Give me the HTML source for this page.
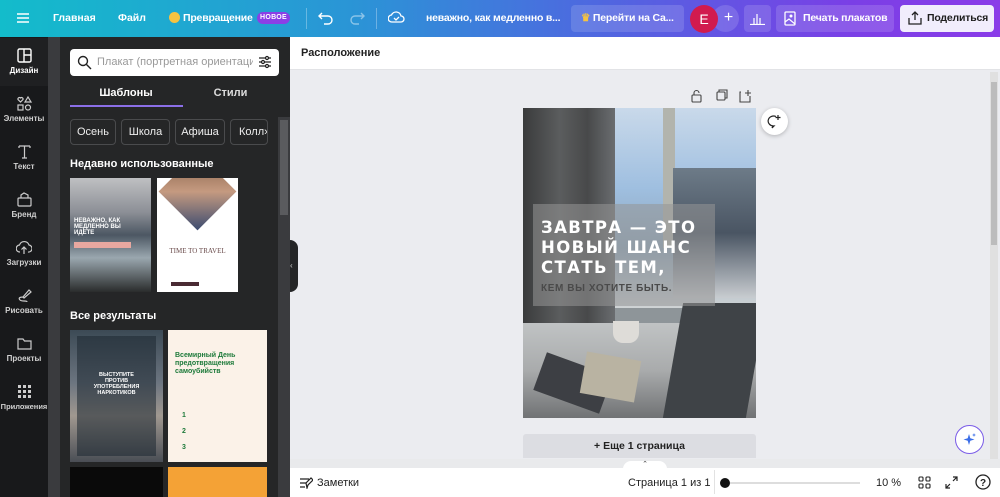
<!DOCTYPE html>
<html><head><meta charset="utf-8"><style>
*{margin:0;padding:0;box-sizing:border-box;white-space:nowrap}
body{width:1000px;height:497px;overflow:hidden;font-family:"Liberation Sans","Noto Sans CJK SC",sans-serif;background:#ebecf0;position:relative}
.abs{position:absolute}
.top{left:0;top:0;width:1000px;height:37px;background:linear-gradient(90deg,#13bccb 0%,#2a95d6 35%,#4f67e0 60%,#7a3fe6 85%,#8a3ce8 100%);color:#fff;font-size:10.5px;font-weight:bold}
.top span{position:absolute;top:12px}
.btn{position:absolute;top:5px;height:27px;border-radius:4px;background:rgba(255,255,255,.14);color:#fff;font-size:10.5px;font-weight:bold;line-height:27px;overflow:hidden}
.side{left:0;top:37px;width:48px;height:460px;background:#18191b;color:#d0d0d0;font-size:8px;font-weight:bold;text-align:center}
.si{position:absolute;left:0;width:48px;height:48px}
.si svg{display:block;margin:10px auto 3px}
.panel{left:60px;top:37px;width:230px;height:460px;background:#252627}
.chip{position:absolute;top:82px;height:26px;border:1px solid #4a4b4d;border-radius:4px;color:#eee;font-size:11px;line-height:24px;text-align:center}
</style></head><body>
<div class="abs top">
<svg class="abs" style="left:17px;top:12px" width="12" height="12" viewBox="0 0 12 12"><path d="M0 2h12M0 6h12M0 10h12" stroke="#fff" stroke-width="1.4"/></svg>
<span style="left:53px">Главная</span><span style="left:118px">Файл</span>
<div class="abs" style="left:169px;top:12px;width:11px;height:11px;border-radius:50%;background:#f5c342"></div>
<span style="left:183px;letter-spacing:-.2px">Превращение</span>
<div class="abs" style="left:257px;top:12px;width:33px;height:12px;border-radius:6px;background:#8b3fe6;font-size:7px;line-height:12px;text-align:center;letter-spacing:.3px">НОВОЕ</div>
<div class="abs" style="left:306px;top:8px;width:1px;height:21px;background:rgba(255,255,255,.3)"></div>
<svg class="abs" style="left:318px;top:11px" width="16" height="14" viewBox="0 0 16 14"><path d="M4 2L1 5l3 3M1 5h9a4 4 0 010 8H6" fill="none" stroke="#fff" stroke-width="1.4"/></svg>
<svg class="abs" style="left:349px;top:11px" width="16" height="14" viewBox="0 0 16 14"><path d="M12 2l3 3-3 3M15 5H6a4 4 0 000 8h4" fill="none" stroke="rgba(255,255,255,.45)" stroke-width="1.4"/></svg>
<div class="abs" style="left:376px;top:8px;width:1px;height:21px;background:rgba(255,255,255,.3)"></div>
<svg class="abs" style="left:388px;top:10px" width="17" height="14" viewBox="0 0 17 14"><path d="M4 12h9a3 3 0 000-6 5 5 0 00-9.5-1A3.5 3.5 0 004 12z" fill="none" stroke="#fff" stroke-width="1.3"/><path d="M6 8l2 2 3-3" fill="none" stroke="#fff" stroke-width="1.3"/></svg>
<span style="left:426px;letter-spacing:-.2px">неважно, как медленно в...</span>
<div class="btn" style="left:571px;width:113px;padding-left:10px;letter-spacing:-.2px"><span style="color:#f5c342;position:static">♛</span> Перейти на Са...</div>
<div class="abs" style="left:712px;top:5px;width:27px;height:27px;border-radius:50%;background:rgba(255,255,255,.14);font-size:16px;font-weight:normal;line-height:26px;text-align:center;padding-left:6px">+</div>
<div class="abs" style="left:690px;top:5px;width:28px;height:28px;border-radius:50%;background:#d11b4f;font-size:14px;font-weight:normal;line-height:28px;text-align:center">E</div>
<div class="btn" style="left:744px;width:27px"><svg style="margin:7px 6px" width="15" height="13" viewBox="0 0 15 13"><path d="M0 12.5h15M4 12V6M7 12V2M10 12V6" stroke="#fff" stroke-width="1.2"/></svg></div>
<div class="btn" style="left:776px;width:118px"><svg class="abs" style="left:8px;top:6px" width="12" height="15" viewBox="0 0 12 15"><rect x="1" y="1" width="10" height="13" rx="1" fill="none" stroke="#fff" stroke-width="1.3"/><circle cx="7" cy="5" r="1.5" fill="#fff"/><path d="M1 11l4-3 6 5" fill="none" stroke="#fff" stroke-width="1.2"/></svg><span style="left:27px;top:0;letter-spacing:-.2px">Печать плакатов</span></div>
<div class="btn" style="left:900px;width:94px;background:#f1edfc;color:#1e1e1e"><svg class="abs" style="left:8px;top:6px" width="14" height="14" viewBox="0 0 14 14"><path d="M7 9V1M4 4l3-3 3 3M1 7v6h12V7" fill="none" stroke="#222" stroke-width="1.3"/></svg><span style="left:27px;top:0;letter-spacing:-.2px">Поделиться</span></div>
</div>

<div class="abs side">
<div class="si" style="top:1px;background:#1f2022;color:#fff"><svg width="15" height="15" viewBox="0 0 15 15"><rect x="1" y="1" width="13" height="13" rx="1.5" fill="none" stroke="#fff" stroke-width="1.4"/><path d="M7 1v13M7 7h7" stroke="#fff" stroke-width="1.4"/></svg>Дизайн</div>
<div class="si" style="top:49px"><svg width="15" height="15" viewBox="0 0 15 15" fill="none" stroke="#ccc" stroke-width="1.2"><path d="M3.5 6L1 3.5a1.5 1.5 0 012.5-1.5 1.5 1.5 0 012.5 1.5z"/><path d="M11 1l3 5H8z"/><rect x="1" y="9" width="5" height="5"/><circle cx="11" cy="11.5" r="2.5"/></svg>Элементы</div>
<div class="si" style="top:97px"><svg width="15" height="15" viewBox="0 0 15 15"><path d="M2 2h11M7.5 2v12M2 2v2M13 2v2M5 14h5" stroke="#ccc" stroke-width="1.2" fill="none"/></svg>Текст</div>
<div class="si" style="top:145px"><svg width="15" height="15" viewBox="0 0 15 15" fill="none" stroke="#ccc" stroke-width="1.2"><rect x="1" y="6" width="13" height="8" rx="1"/><path d="M4 6V3l3-2 4 2v3"/></svg>Бренд</div>
<div class="si" style="top:193px"><svg width="16" height="15" viewBox="0 0 16 15" fill="none" stroke="#ccc" stroke-width="1.2"><path d="M4 12a3.5 3.5 0 01-.5-7A5 5 0 0113 5a3.5 3.5 0 01-1 7M8 14V7M5.5 9.5L8 7l2.5 2.5"/></svg>Загрузки</div>
<div class="si" style="top:241px"><svg width="15" height="15" viewBox="0 0 15 15" fill="none" stroke="#ccc" stroke-width="1.2"><path d="M6 9l6-7 2 2-7 6zM6 9c-3 0-5 1-3 3s7 0 7 2"/></svg>Рисовать</div>
<div class="si" style="top:289px"><svg width="15" height="15" viewBox="0 0 15 15" fill="none" stroke="#ccc" stroke-width="1.2"><path d="M1 3h5l1.5 2H14v8H1z"/></svg>Проекты</div>
<div class="si" style="top:337px;font-size:7.5px"><svg width="15" height="15" viewBox="0 0 15 15" fill="#ccc"><rect x="1" y="1" width="3" height="3"/><rect x="6" y="1" width="3" height="3"/><rect x="11" y="1" width="3" height="3"/><rect x="1" y="6" width="3" height="3"/><rect x="6" y="6" width="3" height="3"/><rect x="11" y="6" width="3" height="3"/><rect x="1" y="11" width="3" height="3"/><rect x="6" y="11" width="3" height="3"/><rect x="11" y="11" width="3" height="3"/></svg>Приложения</div>
</div>
<div class="abs" style="left:48px;top:37px;width:12px;height:460px;background:#3a3b3e"></div>

<div class="abs panel">
<div class="abs" style="left:10px;top:12px;width:209px;height:27px;background:#fff;border-radius:4px"></div>
<svg class="abs" style="left:17px;top:18px" width="15" height="15" viewBox="0 0 15 15"><circle cx="6" cy="6" r="4.5" fill="none" stroke="#222" stroke-width="1.4"/><path d="M9.5 9.5L14 14" stroke="#222" stroke-width="1.4"/></svg>
<div class="abs" style="left:37px;top:19px;width:156px;overflow:hidden;font-size:11px;color:#999">Плакат (портретная ориентация):</div>
<svg class="abs" style="left:198px;top:18px" width="14" height="14" viewBox="0 0 14 14" stroke="#222" stroke-width="1.2" fill="#fff"><path d="M1 3h12M1 7h12M1 11h12"/><circle cx="9" cy="3" r="1.5"/><circle cx="5" cy="7" r="1.5"/><circle cx="9" cy="11" r="1.5"/></svg>
<div class="abs" style="left:10px;top:50px;width:112px;text-align:center;color:#fff;font-size:11px;font-weight:bold">Шаблоны</div>
<div class="abs" style="left:122px;top:50px;width:97px;text-align:center;color:#ddd;font-size:11px;font-weight:bold">Стили</div>
<div class="abs" style="left:10px;top:68px;width:113px;height:2px;background:#8b6fe8"></div>
<div class="chip" style="left:10px;width:46px">Осень</div>
<div class="chip" style="left:61px;width:49px">Школа</div>
<div class="chip" style="left:115px;width:50px">Афиша</div>
<div class="chip" style="left:170px;width:38px;text-align:left;padding-left:8px;overflow:hidden">Колл›</div>
<div class="abs" style="left:10px;top:121px;color:#fff;font-size:11px;font-weight:bold">Недавно использованные</div>
<div class="abs" style="left:10px;top:141px;width:81px;height:114px;background:linear-gradient(180deg,#bfc0c2 0%,#8c8f96 30%,#4c5763 50%,#9aa7af 70%,#2a2c2c 100%)">
<div style="position:absolute;left:4px;top:40px;color:#fff;font-size:6px;font-weight:bold;line-height:6px">НЕВАЖНО, КАК<br>МЕДЛЕННО ВЫ<br>ИДЕТЕ</div>
<div style="position:absolute;left:4px;top:64px;width:57px;height:6px;background:#e8a8a0"></div></div>
<div class="abs" style="left:97px;top:141px;width:81px;height:114px;background:#fff;overflow:hidden">
<div style="position:absolute;left:13px;top:-14px;width:55px;height:55px;transform:rotate(45deg);background:linear-gradient(135deg,#7a5840,#c59a80,#3b4b70)"></div>
<div style="position:absolute;left:0;top:69px;width:81px;text-align:center;font-family:'Liberation Serif',serif;font-size:7px;color:#6a4b4b">TIME TO TRAVEL</div>
<div style="position:absolute;left:14px;top:104px;width:28px;height:4px;background:#4a2b33"></div></div>
<div class="abs" style="left:10px;top:273px;color:#fff;font-size:11px;font-weight:bold">Все результаты</div>
<div class="abs" style="left:10px;top:293px;width:93px;height:132px;background:linear-gradient(180deg,#3c4a55,#6c7580 40%,#a09890 65%,#4a4e55)"><div style="position:absolute;left:7px;top:6px;width:79px;height:120px;background:rgba(30,40,50,.55)"></div><div style="position:absolute;left:0;top:42px;width:93px;text-align:center;color:#fff;font-size:5.5px;font-weight:bold;line-height:6px">ВЫСТУПИТЕ<br>ПРОТИВ<br>УПОТРЕБЛЕНИЯ<br>НАРКОТИКОВ</div></div>
<div class="abs" style="left:108px;top:293px;width:99px;height:132px;background:#fbf2e8">
<div style="position:absolute;left:7px;top:22px;color:#1d7a3a;font-size:7px;font-weight:bold;line-height:8px">Всемирный День<br>предотвращения<br>самоубийств</div>
<div style="position:absolute;left:14px;top:78px;color:#1d7a3a;font-size:7px;line-height:16px;font-weight:bold">1<br>2<br>3</div></div>
<div class="abs" style="left:10px;top:430px;width:93px;height:30px;background:#0a0a0a"></div>
<div class="abs" style="left:108px;top:430px;width:99px;height:30px;background:#f4a236"></div>
<div class="abs" style="left:218px;top:80px;width:12px;height:380px;background:#3a3b3e"></div>
<div class="abs" style="left:220px;top:83px;width:8px;height:95px;background:#5a5b5e"></div>
</div>
<div class="abs" style="left:290px;top:240px;width:8px;height:52px;background:#252627;border-radius:0 8px 8px 0;color:#ccc;font-size:8px;line-height:52px">‹</div>

<div class="abs" style="left:290px;top:37px;width:710px;height:33px;background:#fff;border-bottom:1px solid #e2e3e6"></div>
<div class="abs" style="left:301px;top:47px;font-size:11px;color:#222;font-weight:bold">Расположение</div>
<div class="abs" style="left:990px;top:72px;width:8px;height:396px;background:#e0e0e0"></div>
<div class="abs" style="left:991px;top:82px;width:6px;height:163px;background:#bcbcbc"></div>
<svg class="abs" style="left:690px;top:89px" width="70" height="14" viewBox="0 0 70 14" fill="none" stroke="#444" stroke-width="1.1"><rect x="2" y="6" width="9" height="7" rx="1"/><path d="M4 6V4a2.5 2.5 0 015 0"/><rect x="27" y="3" width="8" height="8" rx="1"/><path d="M29 3V1h8v8h-2"/><path d="M51 3h-1v10h10V7M58 1v6M55 4h6"/></svg>
<div class="abs" style="left:761px;top:108px;width:27px;height:27px;border-radius:50%;background:#fff;box-shadow:0 1px 4px rgba(0,0,0,.25)"><svg style="margin:6px" width="15" height="15" viewBox="0 0 15 15" fill="none" stroke="#222" stroke-width="1.2"><path d="M9 2.5A5.5 5 0 107 12L5 14l1-2M11 1v5M8.5 3.5h5"/></svg></div>

<div class="abs" style="left:523px;top:108px;width:233px;height:310px;overflow:hidden;background:#8e9599">
<div class="abs" style="left:0;top:0;width:92px;height:310px;background:linear-gradient(90deg,#3a3b3c,#5b5d5e 40%,#48494a 70%,#6a6d70)"></div>
<div class="abs" style="left:92px;top:0;width:141px;height:200px;background:linear-gradient(180deg,#c9d9ea,#9fbfe0 40%,#8ea6bb 70%,#cfd3d5)"></div>
<div class="abs" style="left:140px;top:0;width:12px;height:140px;background:#b2b4ad"></div>
<div class="abs" style="left:150px;top:60px;width:83px;height:130px;background:linear-gradient(180deg,#6d7b88,#4a5563 50%,#c8ccd0)"></div>
<div class="abs" style="left:0;top:215px;width:233px;height:95px;background:linear-gradient(180deg,#c0c3c4,#a9abac 50%,#707274)"></div>
<div class="abs" style="left:150px;top:195px;width:83px;height:115px;background:#3f4347;transform:skewX(-10deg)"></div>
<div class="abs" style="left:15px;top:255px;width:70px;height:40px;background:#3d3f44;transform:rotate(20deg)"></div>
<div class="abs" style="left:60px;top:248px;width:55px;height:42px;background:#b9b3a2;transform:rotate(10deg)"></div>
<div class="abs" style="left:90px;top:213px;width:26px;height:22px;border-radius:0 0 10px 10px;background:#dedcd8"></div>
<div class="abs" style="left:10px;top:96px;width:182px;height:102px;background:rgba(150,150,150,.55)"></div>
<div class="abs" style="left:18px;top:110px;color:#fff;font-size:16.5px;font-weight:bold;letter-spacing:1.4px;line-height:20px;font-family:'DejaVu Sans','Liberation Sans',sans-serif">ЗАВТРА — ЭТО<br>НОВЫЙ ШАНС<br>СТАТЬ ТЕМ,</div>
<div class="abs" style="left:18px;top:175px;color:#4a4a4a;font-size:10px;font-weight:bold;letter-spacing:.6px">КЕМ ВЫ ХОТИТЕ БЫТЬ.</div>
</div>

<div class="abs" style="left:523px;top:434px;width:233px;height:24px;background:#dcdde2;border-radius:3px 3px 0 0;text-align:center;font-size:10.5px;color:#222;line-height:24px;font-weight:bold">+ Еще 1 страница</div>
<div class="abs" style="left:955px;top:425px;width:29px;height:29px;border-radius:50%;background:#fff;border:1.5px solid #7a5ce8"><svg style="margin:6px" width="15" height="15" viewBox="0 0 15 15"><path d="M7 2l1.3 4.2L12.5 7.5 8.3 8.8 7 13 5.7 8.8 1.5 7.5 5.7 6.2z" fill="#3b6ee8"/><path d="M12 1l.5 1.5L14 3l-1.5.5L12 5l-.5-1.5L10 3l1.5-.5z" fill="#3b6ee8"/></svg></div>

<div class="abs" style="left:290px;top:459px;width:710px;height:9px;background:#e9eaec"></div>
<div class="abs" style="left:623px;top:461px;width:44px;height:8px;border-radius:10px 10px 0 0;background:#fff;font-size:7px;text-align:center;line-height:8px;color:#444">⌃</div>
<div class="abs" style="left:290px;top:468px;width:710px;height:29px;background:#fff"></div>
<svg class="abs" style="left:300px;top:477px" width="13" height="12" viewBox="0 0 13 12" fill="none" stroke="#222" stroke-width="1.2"><path d="M0 2h9M0 6h6M0 10h5M7 11l1-3 5-5-2-2-5 5z"/></svg>
<div class="abs" style="left:317px;top:477px;font-size:11px;color:#222">Заметки</div>
<div class="abs" style="left:628px;top:477px;font-size:11px;color:#222">Страница 1 из 1</div>
<div class="abs" style="left:714px;top:470px;width:1px;height:24px;background:#e2e2e2"></div>
<div class="abs" style="left:720px;top:478px;width:10px;height:10px;border-radius:50%;background:#111"></div>
<div class="abs" style="left:730px;top:482px;width:130px;height:2px;background:#ddd"></div>
<div class="abs" style="left:876px;top:477px;font-size:11px;color:#222">10 %</div>
<svg class="abs" style="left:918px;top:476px" width="13" height="13" viewBox="0 0 13 13" fill="none" stroke="#222" stroke-width="1.1"><rect x="1" y="1" width="4" height="4" rx="1"/><rect x="8" y="1" width="4" height="4" rx="1"/><rect x="1" y="8" width="4" height="4" rx="1"/><rect x="8" y="8" width="4" height="4" rx="1"/></svg>
<svg class="abs" style="left:945px;top:476px" width="13" height="13" viewBox="0 0 13 13" fill="none" stroke="#222" stroke-width="1.2"><path d="M8 1h4v4M12 1L8 5M5 12H1V8M1 12l4-4"/></svg>
<svg class="abs" style="left:975px;top:474px" width="16" height="16" viewBox="0 0 16 16"><circle cx="8" cy="8" r="7" fill="none" stroke="#222" stroke-width="1.3"/><text x="8" y="12" font-size="10" text-anchor="middle" font-family="Liberation Sans" font-weight="bold" fill="#222">?</text></svg>
</body></html>
